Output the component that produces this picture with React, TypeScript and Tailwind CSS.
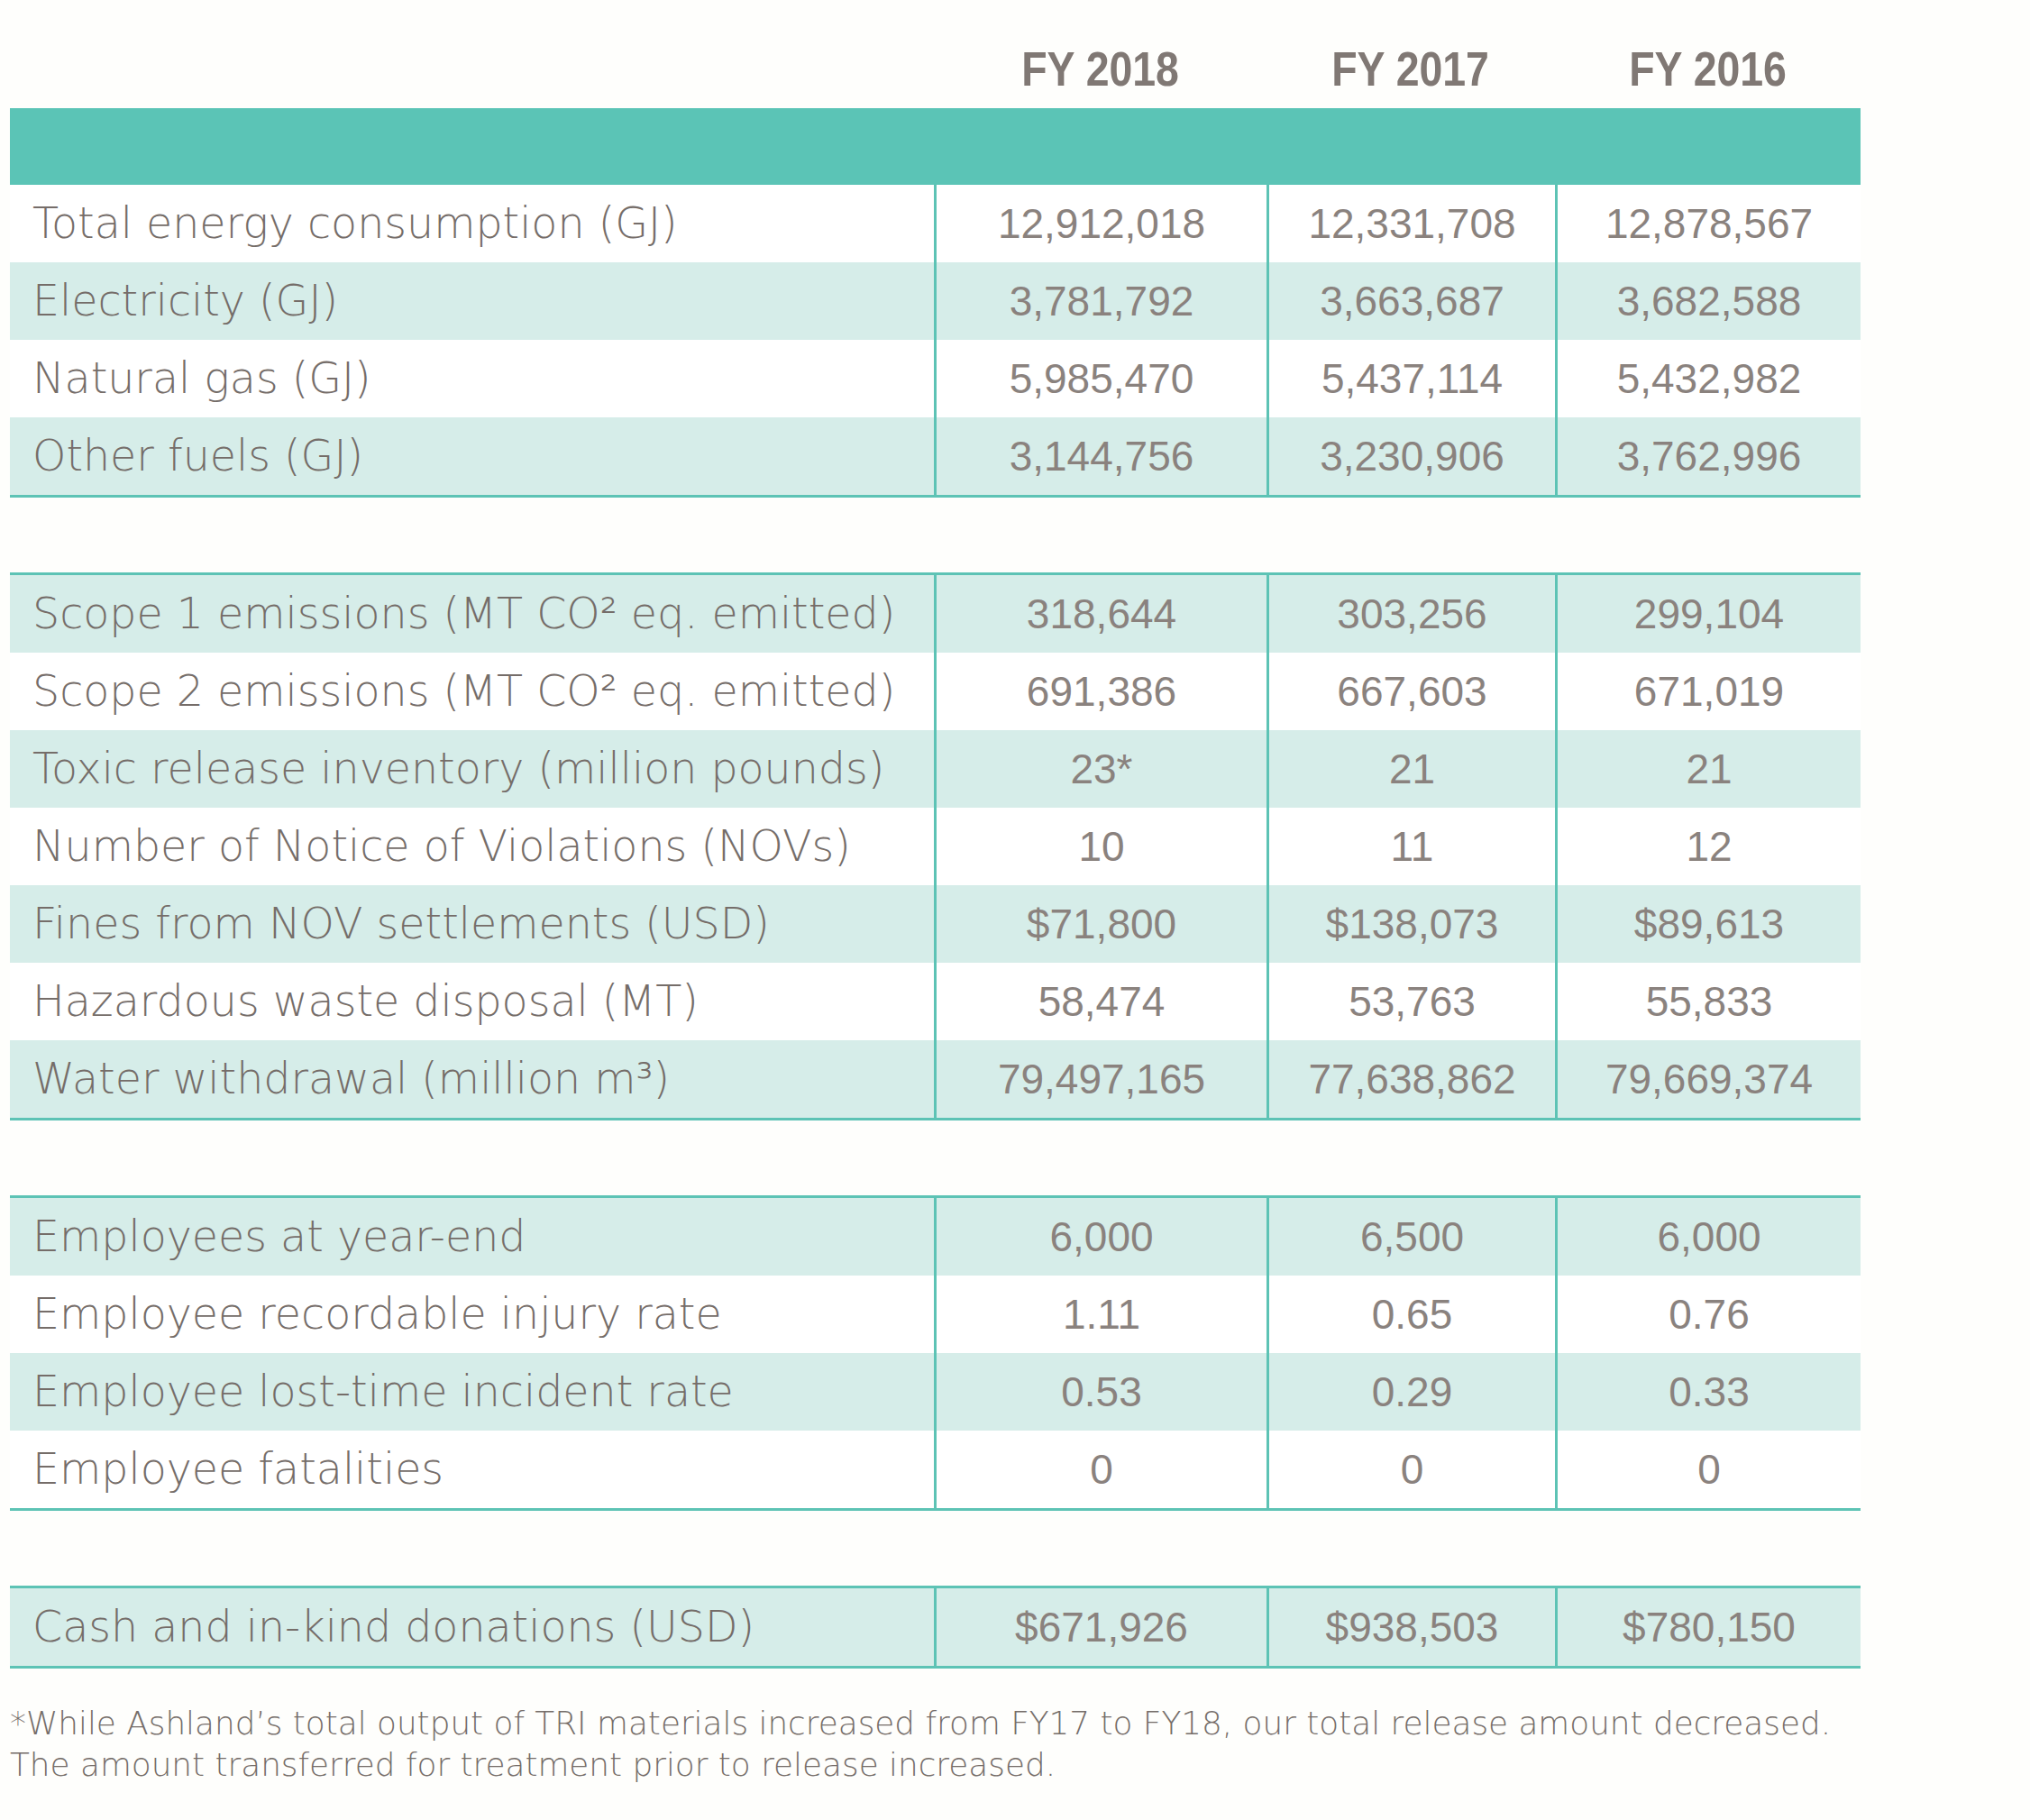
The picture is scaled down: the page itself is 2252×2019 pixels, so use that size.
import React from 'react'

type Row = [string, string, string, string]

const ENERGY: Row[] = [
  ['Total energy consumption (GJ)', '12,912,018', '12,331,708', '12,878,567'],
  ['Electricity (GJ)', '3,781,792', '3,663,687', '3,682,588'],
  ['Natural gas (GJ)', '5,985,470', '5,437,114', '5,432,982'],
  ['Other fuels (GJ)', '3,144,756', '3,230,906', '3,762,996'],
]

const ENVIRONMENT: Row[] = [
  ['Scope 1 emissions (MT CO² eq. emitted)', '318,644', '303,256', '299,104'],
  ['Scope 2 emissions (MT CO² eq. emitted)', '691,386', '667,603', '671,019'],
  ['Toxic release inventory (million pounds)', '23*', '21', '21'],
  ['Number of Notice of Violations (NOVs)', '10', '11', '12'],
  ['Fines from NOV settlements (USD)', '$71,800', '$138,073', '$89,613'],
  ['Hazardous waste disposal (MT)', '58,474', '53,763', '55,833'],
  ['Water withdrawal (million m³)', '79,497,165', '77,638,862', '79,669,374'],
]

const SAFETY: Row[] = [
  ['Employees at year-end', '6,000', '6,500', '6,000'],
  ['Employee recordable injury rate', '1.11', '0.65', '0.76'],
  ['Employee lost-time incident rate', '0.53', '0.29', '0.33'],
  ['Employee fatalities', '0', '0', '0'],
]

const COMMUNITY: Row[] = [
  ['Cash and in-kind donations (USD)', '$671,926', '$938,503', '$780,150'],
]

const YEARS = ['FY 2018', 'FY 2017', 'FY 2016']

function Section({ rows, shadeFirst, topBorder }: { rows: Row[]; shadeFirst: boolean; topBorder: boolean }) {
  return (
    <div className={`border-b-[3px] border-[#5dc3b5] ${topBorder ? 'border-t-[3px]' : ''}`}>
      {rows.map((row, i) => {
        const shaded = shadeFirst ? i % 2 === 0 : i % 2 === 1
        return (
          <div
            key={row[0]}
            className={`grid grid-cols-[1025px_369px_320px_339px] h-[86px] ${shaded ? 'bg-[#d6ede9]' : 'bg-white'}`}
          >
            <div className="flex items-center pl-[25px] text-[47.5px] font-light font-['DejaVu_Sans',sans-serif] text-[#756d69] whitespace-nowrap">
              {row[0]}
            </div>
            {row.slice(1).map((v, j) => (
              <div
                key={j}
                className="flex items-center justify-center border-l-[3px] border-[#5dc3b5] text-[46px] font-['Liberation_Sans',Arial,sans-serif] text-[#8a827e]"
              >
                {v}
              </div>
            ))}
          </div>
        )
      })}
    </div>
  )
}

export default function App() {
  return (
    <div className="min-h-screen w-full bg-[#fefefc]">
      <div className="pl-[11px] w-[2064px]">
        {/* Year heading */}
        <div className="grid grid-cols-[1025px_369px_320px_339px] h-[120px]">
          <div />
          {YEARS.map(y => (
            <div key={y} className="flex items-center justify-center pt-[33px]">
              <span className="inline-block scale-x-[0.86] text-[54px] font-bold font-['Liberation_Sans',Arial,sans-serif] text-[#807874]">
                {y}
              </span>
            </div>
          ))}
        </div>

        <div className="h-[85px] bg-[#5bc4b6]" />
        <Section rows={ENERGY} shadeFirst={false} topBorder={false} />

        <div className="h-[83px]" />
        <Section rows={ENVIRONMENT} shadeFirst={true} topBorder={true} />

        <div className="h-[83px]" />
        <Section rows={SAFETY} shadeFirst={true} topBorder={true} />

        <div className="h-[83px]" />
        <Section rows={COMMUNITY} shadeFirst={true} topBorder={true} />

        <p className="mt-[38px] text-[35.8px] leading-[46px] font-light font-['DejaVu_Sans',sans-serif] text-[#756d69] whitespace-nowrap">
          *While Ashland’s total output of TRI materials increased from FY17 to FY18, our total release amount decreased.
          <br />
          The amount transferred for treatment prior to release increased.
        </p>
      </div>
    </div>
  )
}
